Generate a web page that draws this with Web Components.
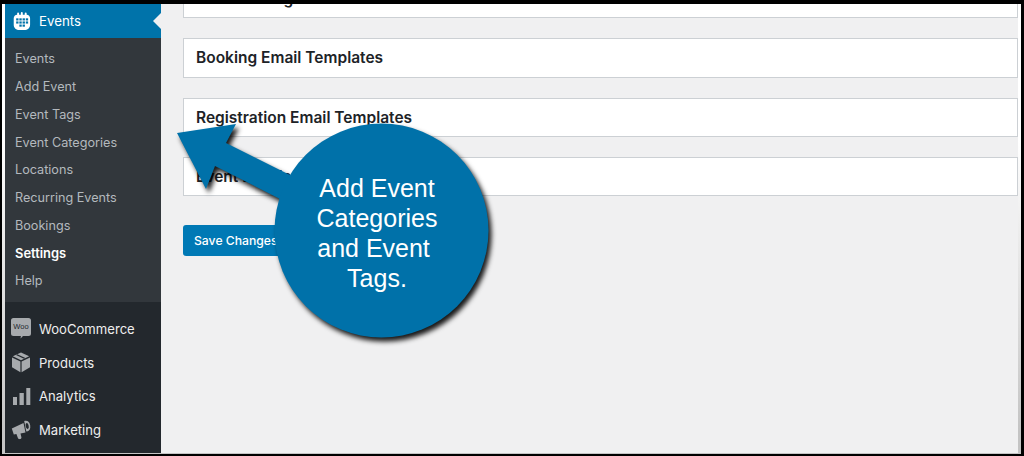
<!DOCTYPE html>
<html lang="en">
<head>
<meta charset="utf-8">
<title>Events settings</title>
<style>
  html, body { margin: 0; padding: 0; background: #000; }
  body { width: 1024px; height: 456px; overflow: hidden; font-family: Inter, "Liberation Sans", sans-serif; }
</style>
</head>
<body>
<wp-shell>
  <wp-sidebar slot="side">
    <wp-menu-head label="Events" slot="head"></wp-menu-head>
    <wp-sub-item slot="sub">Events</wp-sub-item>
    <wp-sub-item slot="sub">Add Event</wp-sub-item>
    <wp-sub-item slot="sub">Event Tags</wp-sub-item>
    <wp-sub-item slot="sub">Event Categories</wp-sub-item>
    <wp-sub-item slot="sub">Locations</wp-sub-item>
    <wp-sub-item slot="sub">Recurring Events</wp-sub-item>
    <wp-sub-item slot="sub">Bookings</wp-sub-item>
    <wp-sub-item slot="sub" current>Settings</wp-sub-item>
    <wp-sub-item slot="sub">Help</wp-sub-item>
    <wp-top-item slot="top" icon="woo">WooCommerce</wp-top-item>
    <wp-top-item slot="top" icon="box">Products</wp-top-item>
    <wp-top-item slot="top" icon="bars">Analytics</wp-top-item>
    <wp-top-item slot="top" icon="horn">Marketing</wp-top-item>
  </wp-sidebar>
  <wp-settings-card>Email Settings</wp-settings-card>
  <wp-settings-card>Booking Email Templates</wp-settings-card>
  <wp-settings-card>Registration Email Templates</wp-settings-card>
  <wp-settings-card>Event Emails</wp-settings-card>
  <wp-save-button>Save Changes</wp-save-button>
  <wp-callout slot="over">Add Event<br>Categories<br>and Event&nbsp;<br>Tags.</wp-callout>
</wp-shell>

<script>
const ICONS = {
  woo: `<svg width="20" height="21" viewBox="0 0 20 21"><path fill="#a7aaad" d="M2.500 0h15A2.500 2.500 0 0 1 20 2.500v13a2.500 2.500 0 0 1-2.500 2.500H12l-2.500 2.500.4-2.500H2.500A2.500 2.500 0 0 1 0 15.500v-13A2.500 2.500 0 0 1 2.500 0z"/></svg><span class="woo">Woo</span>`,
  box: `<svg width="20" height="21" viewBox="0 0 20 21"><path fill="#a7aaad" d="M10 .5 1.800 4.300 10 8.300l8.200-4zM1 5.500v9.800l8.400 5V9.500zM19 5.500l-8.400 4v10.800l8.400-5z"/><path fill="#23282d" d="m6.300 2.300 8 3.800-1.300.6-8-3.800z"/></svg>`,
  bars: `<svg width="20" height="21" viewBox="0 0 20 21"><path fill="#a7aaad" d="M2 11h4v8H2zM8.500 7h4.300v12H8.500zM15.300 2h4v17h-4z"/></svg>`,
  horn: `<svg width="20" height="21" viewBox="0 0 20 21"><path fill="#a7aaad" d="M.800 9.500 12.500 4l2 9.500-5 .9.900 3.900c.2.800-.2 1.400-1 1.600l-.8.200c-.8.200-1.400-.2-1.700-1l-1.500-4-2.600.5z"/><path fill="#a7aaad" d="M14 1.800c2.800-.6 4.700 1.600 5.200 4.600s-.6 5.500-3.200 6l-.8-.1L13.200 2z"/><ellipse cx="16.200" cy="7" rx="1.500" ry="3" transform="rotate(-11 16.200 7)" fill="#23282d"/></svg>`
};

function define(name, css, html, init) {
  customElements.define(name, class extends HTMLElement {
    connectedCallback() {
      if (this.shadowRoot) return;
      this.attachShadow({ mode: 'open' });
      this.shadowRoot.innerHTML = `<style>${css}</style>${html}`;
      if (init) init(this, this.shadowRoot);
    }
  });
}

define('wp-shell', `
  :host { display: block; position: relative; width: 1024px; height: 456px; box-sizing: border-box; background: #000; padding: 4px 3px 2px 2px; overflow: hidden; }
  .frame { display: flex; height: 100%; padding-left: 3px; padding-right: 3px; padding-bottom: 1px; background: linear-gradient(#fff 30%, #c4c4c4 95%); box-sizing: border-box; }
  .main { flex: 1; min-width: 0; background: #f0f0f1; overflow: hidden; padding-left: 22px; }
  .inner { display: flex; flex-direction: column; margin-top: -25px; }
`, `
  <div class="frame">
    <slot name="side"></slot>
    <div class="main"><div class="inner"><slot></slot></div></div>
  </div>
  <slot name="over"></slot>
`);

define('wp-sidebar', `
  :host { display: flex; flex-direction: column; width: 156px; flex: none; background: #23282d; }
  .sub { display: flex; flex-direction: column; background: #32373c; padding: 7px 0 7px; height: 264px; box-sizing: border-box; }
  .top { display: flex; flex-direction: column; padding-top: 10px; }
`, `
  <slot name="head"></slot>
  <div class="sub"><slot name="sub"></slot></div>
  <div class="top"><slot name="top"></slot></div>
`);

define('wp-menu-head', `
  :host { display: flex; align-items: center; position: relative; height: 34px; background: #0073aa; color: #fff; font-size: 13.300px; gap: 8px; padding-left: 8px; box-sizing: border-box; font-weight: 400; }
  :host::after { content: ""; position: absolute; right: 0; top: 9px; border: 8px solid transparent; border-left-width: 0; border-right-color: #f0f0f1; }
  svg { display: block; }
`, `
  <svg width="18" height="18" viewBox="1 .5 18 18.500">
    <path fill="#fff" d="M1.500 7C1.500 4.800 3 3.500 5 3.300V2a1 1 0 0 1 2 0v1.200h1.800V1.500a1 1 0 0 1 2 0v1.700h2V2a1 1 0 0 1 2 0v1.300c2 .2 3.500 1.500 3.500 3.700v6.500c0 3.300-2.500 5.500-6 5.500H7.500c-3.500 0-6-2.200-6-5.500z"/>
    <g fill="#0073aa">
      <rect x="4" y="7" width="2.400" height="2.200"/><rect x="7.300" y="7" width="2.400" height="2.200"/><rect x="10.600" y="7" width="2.400" height="2.200"/><rect x="13.900" y="7" width="2.400" height="2.200"/>
      <rect x="4" y="10.200" width="2.400" height="2.200"/><rect x="7.300" y="10.200" width="2.400" height="2.200"/><rect x="10.600" y="10.200" width="2.400" height="2.200"/><rect x="13.900" y="10.200" width="2.400" height="2.200"/>
      <rect x="7.300" y="13.400" width="2.400" height="2.200"/><rect x="10.600" y="13.400" width="2.400" height="2.200"/>
    </g>
  </svg>
  <span id="t"></span>
`, (el, root) => { root.getElementById('t').textContent = el.getAttribute('label'); });

define('wp-sub-item', `
  :host { display: flex; align-items: center; height: 27.750px; padding-left: 10px; color: #b4b9be; font-size: 12.650px; flex: none; }
  :host([current]) { color: #fff; font-weight: 600; font-size: 12.900px; }
`, `<slot></slot>`);

define('wp-top-item', `
  :host { display: flex; align-items: center; height: 33.700px; color: #eee; font-size: 13.100px; gap: 8px; padding-left: 6px; flex: none; font-weight: 400; }
  .ic { position: relative; display: block; width: 20px; height: 21px; flex: none; }
  svg { display: block; }
  .woo { position: absolute; left: 0; right: 0; top: 3px; text-align: center; font: 400 7.500px/11px "Liberation Sans", sans-serif; color: #23282d; }
`, `<span class="ic"></span><slot></slot>`, (el, root) => {
  root.querySelector('.ic').innerHTML = ICONS[el.getAttribute('icon')];
});

define('wp-settings-card', `
  :host { display: flex; align-items: center; height: 39.300px; box-sizing: border-box; background: #fff; border: 1px solid #ccd0d4; padding-left: 12px; margin-bottom: 20px; color: #1d2327; font-size: 15.500px; font-weight: 600; flex: none; width: 835px; white-space: nowrap; }
`, `<slot></slot>`);

define('wp-save-button', `
  :host { display: flex; align-items: center; align-self: flex-start; height: 31px; margin-top: 9px; padding: 0 11px; box-sizing: border-box; width: 110px; background: #0079b5; border-radius: 3px; color: #fff; font-size: 12.200px; font-weight: 500; white-space: nowrap; }
`, `<slot></slot>`);

define('wp-callout', `
  :host { display: block; position: absolute; left: 0; top: 0; width: 1024px; height: 456px; pointer-events: none; }
  svg { position: absolute; left: 0; top: 0; filter: drop-shadow(3px 4px 2.500px rgba(0,0,0,.9)); }
  .txt { position: absolute; left: 277px; top: 173px; width: 200px; text-align: center; color: #fff; font: 25px/30px "Liberation Sans", Arial, sans-serif; }
`, `
  <svg width="1024" height="456" viewBox="0 0 1024 456">
    <path fill="#0071a9" d="M177 133 236 124 226 143 292 176 280 199 215 166 206 189z"/>
    <circle cx="381.500" cy="230.500" r="107" fill="#0071a9"/>
  </svg>
  <div class="txt"><slot></slot></div>
`);
</script>
</body>
</html>
